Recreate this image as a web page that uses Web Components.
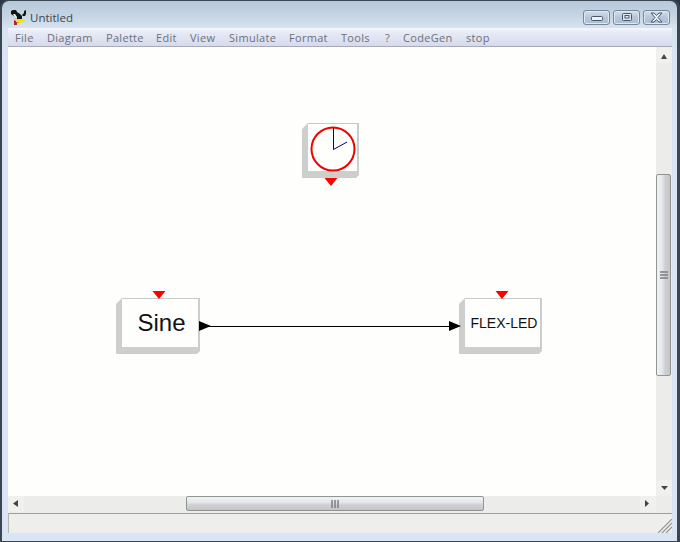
<!DOCTYPE html>
<html>
<head>
<meta charset="utf-8">
<title>Untitled</title>
<style>
  html, body { margin: 0; padding: 0; background: #2a3646; }
  body { width: 680px; height: 542px; overflow: hidden; font-family: "DejaVu Sans", sans-serif; }
</style>
</head>
<body>
<app-window title="Untitled">
  <app-menubar slot="menu">
    <menu-item style="--w:32px">File</menu-item>
    <menu-item style="--w:59px">Diagram</menu-item>
    <menu-item style="--w:50px">Palette</menu-item>
    <menu-item style="--w:34px">Edit</menu-item>
    <menu-item style="--w:39px">View</menu-item>
    <menu-item style="--w:60px">Simulate</menu-item>
    <menu-item style="--w:52px">Format</menu-item>
    <menu-item style="--w:44px">Tools</menu-item>
    <menu-item style="--w:18px">?</menu-item>
    <menu-item style="--w:63px">CodeGen</menu-item>
    <menu-item style="--w:40px">stop</menu-item>
  </app-menubar>
  <diagram-canvas slot="canvas">
    <diagram-block style="left:300px;top:76px;--w:50px;--h:48px;--tri-y:55px;--tri-x:16px;">
      <clock-face></clock-face>
    </diagram-block>
    <diagram-block style="left:114px;top:251px;--w:77px;--h:49px;--tri-y:-7px;--tri-x:30px;--pad:3px;font-size:24px;">Sine</diagram-block>
    <diagram-block style="left:457px;top:251px;--w:76px;--h:49px;--tri-y:-7px;--tri-x:30px;--pad:3px;font-size:14px;">FLEX-LED</diagram-block>
    <diagram-link></diagram-link>
  </diagram-canvas>
  <app-scrollbar slot="vscroll" orient="v"></app-scrollbar>
  <app-scrollbar slot="hscroll" orient="h"></app-scrollbar>
  <app-statusbar slot="status"></app-statusbar>
</app-window>

<script>
class AppWindow extends HTMLElement {
  constructor() {
    super();
    this.attachShadow({mode: 'open'});
    this.shadowRoot.innerHTML = `
<style>
:host {
  display: flex;
  flex-direction: column;
  box-sizing: border-box;
  width: 680px;
  height: 542px;
  padding: 1px 3px 1px 2px;
  border-radius: 8px 8px 0 0;
  background: #3c4653;
}
.frame {
  flex: 1;
  display: flex;
  flex-direction: column;
  border-radius: 7px 7px 0 0;
  background: linear-gradient(to bottom, #b7c8da 0, #c5d4e3 14px, #d6e3f0 27px, #d9e5f5 60px);
  padding: 0 5px 8px 6px;
  min-height: 0;
}
.title {
  box-sizing: border-box;
  height: 27px;
  padding-top: 6px;
  flex: none;
  display: flex;
  align-items: center;
  gap: 3px;
  color: #3b4450;
  font: 11.5px "Open Sans", sans-serif;
  margin-left: 2px;
}
.buttons { margin-left: auto; display: flex; gap: 3px; margin-right: 2px; }
.btn {
  box-sizing: border-box;
  width: 27px;
  height: 15px;
  border: 1px solid #76879a;
  border-radius: 3px;
  background: linear-gradient(to bottom, #d3dfec, #b7c6d8 50%, #aebfd3);
  box-shadow: inset 0 0 0 1px #dfe8f1;
  display: flex;
  align-items: center;
  justify-content: center;
}
.work {
  flex: 1;
  display: grid;
  grid-template-columns: 648px 16px;
  grid-template-rows: 449px 17px;
  min-height: 0;
}
.corner { background: #ecedeb; }
.status-row { flex: none; }
</style>
<div class="frame">
  <div class="title">
    <svg width="17" height="17" viewBox="0 0 17 17">
      <path d="M12 6l2-2 0-2 2-1 0 4-1 2-2 0z" fill="#111"/>
      <path d="M1 2l2-1h3l1 2 3 2 2 2 0 3-6 0-2-3-3-2z" fill="#111"/>
      <path d="M3 5l2 0 2 3 0 2-2-1-1-2z" fill="#f0f0ea"/>
      <path d="M6 10l6 0 4 1-2 1-4 2-3 0z" fill="#f2e400"/>
      <path d="M4 11l2 1 0 1 3 1-2 0 0 2-3 0z" fill="#b8202a"/>
    </svg>
    <span></span>
    <div class="buttons">
      <div class="btn"><svg width="14" height="9"><rect x="1.500" y="3.500" width="11" height="4" rx="1" fill="#eef2f7" stroke="#47566a"/></svg></div>
      <div class="btn"><svg width="14" height="9"><rect x="2.500" y="0.500" width="9" height="7" rx="1" fill="#dfe7ef" stroke="#47566a"/><rect x="5" y="2.500" width="4" height="2.500" fill="#eef2f7" stroke="#47566a" stroke-width="1"/></svg></div>
      <div class="btn"><svg width="15" height="11"><path d="M2 1h3l2.500 2.500L10 1h3l-4 4.500 4 4.500h-3L7.500 7.500 5 10H2l4-4.500z" fill="#eef2f7" stroke="#47566a" stroke-width="1"/></svg></div>
    </div>
  </div>
  <slot name="menu"></slot>
  <div class="work">
    <slot name="canvas"></slot>
    <slot name="vscroll"></slot>
    <slot name="hscroll"></slot>
    <div class="corner"></div>
  </div>
  <div class="status-row"><slot name="status"></slot></div>
</div>`;
    this.shadowRoot.querySelector('.title span').textContent = this.getAttribute('title');
  }
}

class AppMenubar extends HTMLElement {
  constructor() {
    super();
    this.attachShadow({mode: 'open'});
    this.shadowRoot.innerHTML = `
<style>
:host {
  display: flex;
  box-sizing: border-box;
  height: 19px;
  flex: none;
  padding-left: 7px;
  align-items: center;
  background: linear-gradient(to bottom, #f4f7fc 0, #e6e9f5 5px, #d7daec 100%);
  border-bottom: 1px solid #a8aab6;
}
</style>
<slot></slot>`;
  }
}

class MenuItem extends HTMLElement {
  constructor() {
    super();
    this.attachShadow({mode: 'open'});
    this.shadowRoot.innerHTML = `
<style>
:host {
  display: block;
  flex: none;
  width: var(--w);
  color: #6c7078;
  font: 11px "Open Sans", sans-serif;
  letter-spacing: 0.3px;
  white-space: nowrap;
}
</style>
<slot></slot>`;
  }
}

class DiagramCanvas extends HTMLElement {
  constructor() {
    super();
    this.attachShadow({mode: 'open'});
    this.shadowRoot.innerHTML = `
<style>
:host {
  display: block;
  position: relative;
  width: 648px;
  height: 449px;
  overflow: hidden;
  background: #fefefc;
}
</style>
<slot></slot>`;
  }
}

class DiagramBlock extends HTMLElement {
  constructor() {
    super();
    this.attachShadow({mode: 'open'});
    this.shadowRoot.innerHTML = `
<style>
:host {
  display: block;
  position: absolute;
  width: var(--w);
  height: var(--h);
  color: #111;
  font-family: "Liberation Sans", Arial, sans-serif;
}
.shadow {
  position: absolute;
  left: -6px;
  top: 0;
  width: calc(var(--w) + 7px);
  height: calc(var(--h) + 7px);
  background: #cdcfcc;
  clip-path: polygon(6px 0, 100% 0, 100% calc(100% - 3px), calc(100% - 3px) 100%, 0 100%, 0 6px);
}
.face {
  position: absolute;
  inset: 0;
  box-sizing: border-box;
  padding-left: var(--pad, 0);
  border: 1px solid #c9cbc8;
  border-left: 0;
  border-bottom: 0;
  background: #fefefc;
  display: flex;
  align-items: center;
  justify-content: center;
  white-space: nowrap;
}
.tri {
  position: absolute;
  left: var(--tri-x);
  top: var(--tri-y);
}
</style>
<div class="shadow"></div>
<div class="face"><slot></slot></div>
<svg class="tri" width="14" height="8" viewBox="0 0 14 8"><path d="M0.500 0H13.500L7 8z" fill="#fe0000"/></svg>`;
  }
}

class ClockFace extends HTMLElement {
  constructor() {
    super();
    this.attachShadow({mode: 'open'});
    this.shadowRoot.innerHTML = `
<style>:host { display: block; width: 50px; height: 48px; }</style>
<svg width="50" height="48" viewBox="0 0 50 48" style="display:block">
  <circle cx="25" cy="25" r="21.500" fill="none" stroke="#f00000" stroke-width="2"/>
  <path d="M25.500 4V25.500L39 18" fill="none" stroke="#00008a" stroke-width="1"/>
</svg>`;
  }
}

class DiagramLink extends HTMLElement {
  constructor() {
    super();
    this.attachShadow({mode: 'open'});
    this.shadowRoot.innerHTML = `
<style>:host { display: block; position: absolute; left: 191px; top: 271px; width: 264px; height: 14px; }</style>
<svg width="264" height="14" viewBox="0 0 264 14">
  <path d="M0 2L12 7 0 12z M250 2L262 7 250 12z" fill="#000"/>
  <path d="M8 7.500H255" stroke="#000" stroke-width="1"/>
</svg>`;
  }
}

class AppScrollbar extends HTMLElement {
  constructor() {
    super();
    this.attachShadow({mode: 'open'});
    const v = this.getAttribute('orient') === 'v';
    const arrows = v
      ? ['<path d="M5 12L8 7 11 12z" fill="#444"/>', '<path d="M5 6L12 6 8.500 10z" fill="#444"/>']
      : ['<path d="M10 4L5 7.500 10 11z" fill="#444"/>', '<path d="M5 4L9 7.500 5 11z" fill="#444"/>'];
    const grip = v
      ? '<svg width="8" height="8"><path d="M0 1H8M0 4H8M0 7H8" stroke="#7a7e82" stroke-width="1.500"/></svg>'
      : '<svg width="8" height="8"><path d="M1 0V8M4 0V8M7 0V8" stroke="#7a7e82" stroke-width="1.500"/></svg>';
    this.shadowRoot.innerHTML = `
<style>
:host {
  display: flex;
  flex-direction: ${v ? 'column' : 'row'};
  background: #ecedeb;
  ${v ? 'width: 16px; height: 449px;' : 'width: 648px; height: 17px;'}
}
.end { flex: none; width: 16px; height: 16px; background: #f0f1ef; }
.end svg { display: block; }
.gap1 { flex: none; ${v ? 'height: 111px;' : 'width: 162px;'} }
.gap2 { flex: 1; }
.thumb {
  flex: none;
  box-sizing: border-box;
  ${v ? 'height: 202px; width: 15px;' : 'width: 298px; height: 15px;'}
  border: 1px solid #90968f;
  border-radius: 2px;
  background: linear-gradient(to ${v ? 'right' : 'bottom'}, #f0f3f4 0, #e2e8ea 40%, #d2d0d6 60%, #c6c2ca 100%);
  display: flex;
  align-items: center;
  justify-content: center;
}
</style>
<div class="end"><svg width="16" height="16">${arrows[0]}</svg></div>
<div class="gap1"></div>
<div class="thumb">${grip}</div>
<div class="gap2"></div>
<div class="end"><svg width="16" height="16">${arrows[1]}</svg></div>`;
  }
}

class AppStatusbar extends HTMLElement {
  constructor() {
    super();
    this.attachShadow({mode: 'open'});
    this.shadowRoot.innerHTML = `
<style>
:host {
  display: block;
  position: relative;
  box-sizing: border-box;
  height: 20px;
  background: #eeefed;
  border-top: 1px solid #9b9e9b;
  border-left: 1px solid #b4b6b4;
}
svg { position: absolute; right: 0; bottom: 0; }
</style>
<svg width="14" height="14" viewBox="0 0 14 14">
  <path d="M0 14L14 0M4 14L14 4M8 14L14 8" stroke="#8f9392" stroke-width="1.200"/>
</svg>`;
  }
}

customElements.define('app-window', AppWindow);
customElements.define('app-menubar', AppMenubar);
customElements.define('menu-item', MenuItem);
customElements.define('diagram-canvas', DiagramCanvas);
customElements.define('diagram-block', DiagramBlock);
customElements.define('clock-face', ClockFace);
customElements.define('diagram-link', DiagramLink);
customElements.define('app-scrollbar', AppScrollbar);
customElements.define('app-statusbar', AppStatusbar);
</script>
</body>
</html>
